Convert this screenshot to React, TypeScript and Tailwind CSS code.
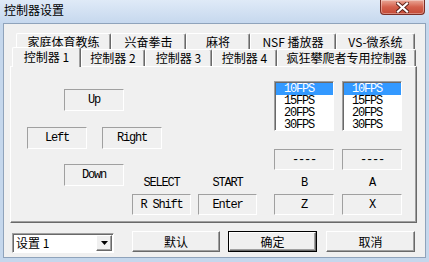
import React from 'react';

const mono = "font-[family-name:'Liberation_Mono',monospace] text-[12px] tracking-[-1.2px] leading-[12px] text-black";
const cjk = "font-[family-name:'Noto_Sans_CJK_SC',sans-serif] text-[12px] text-black";

const edge = 'border border-t-[#a0a0a0] border-l-[#a0a0a0] border-r-white border-b-white flex items-center justify-center';
const raised =
  'border border-t-white border-l-white border-r-[#696969] border-b-[#696969] shadow-[inset_-1px_-1px_0_#a0a0a0] bg-[#f0f0f0] flex items-center justify-center';

const KeyBox: React.FC<{ label: string; className?: string }> = ({ label, className = '' }) => (
  <div className={`${edge} w-[60px] h-[22px] ${className}`}>
    <span className={mono}>{label}</span>
  </div>
);

const KeyColumn: React.FC<{ title: string; value: string; width?: string }> = ({ title, value, width = 'w-[60px]' }) => (
  <div className={`flex flex-col items-center ${width}`}>
    <span className={`${mono} h-[12px]`}>{title}</span>
    <div className={`${edge} ${width} h-[21px] mt-[5px]`}>
      <span className={mono}>{value}</span>
    </div>
  </div>
);

const FpsList: React.FC = () => (
  <div className="w-[60px] h-[50px] bg-white border border-t-[#a0a0a0] border-l-[#a0a0a0] border-r-white border-b-white shadow-[inset_1px_1px_0_#696969]">
    <div className="flex flex-col pt-[1px] pl-[1px]">
      {['10FPS', '15FPS', '20FPS', '30FPS'].map((f, i) => (
        <div
          key={f}
          className={`h-[12px] pl-[8px] flex items-center ${i === 0 ? 'bg-[#3399ff]' : ''}`}
        >
          <span className={`${mono} ${i === 0 ? '!text-white' : ''}`}>{f}</span>
        </div>
      ))}
    </div>
  </div>
);

const backTabs = [
  { label: '家庭体育教练', w: 'w-[95px]' },
  { label: '兴奋拳击', w: 'w-[75px]' },
  { label: '麻将', w: 'w-[64px]' },
  { label: 'NSF 播放器', w: 'w-[86px]' },
  { label: 'VS-微系统', w: 'w-[79px]' },
];

const frontTabs = [
  { label: '控制器 2', w: 'w-[64px]' },
  { label: '控制器 3', w: 'w-[67px]' },
  { label: '控制器 4', w: 'w-[65px]' },
  { label: '疯狂攀爬者专用控制器', w: 'w-[139px]' },
];

const tabCls =
  'h-full border-l border-t border-r border-l-white border-t-white border-r-[#696969] rounded-t-[2px] bg-[#f0f0f0] flex items-center justify-center shadow-[inset_-1px_0_0_#a0a0a0]';

export default function App() {
  return (
    <div className="w-[429px] h-[262px] bg-[#c5d7ec] flex flex-col px-[3px] pb-[4px] overflow-hidden">
      {/* title bar */}
      <div className="h-[23px] -mx-[3px] px-[4px] bg-gradient-to-b from-[#dfeaf7] to-[#c6d8ee] flex items-start justify-between">
        <span className={`${cjk} leading-[20px]`}>控制器设置</span>
        <div className="w-[45px] h-[15px] rounded-b-[4px] border border-t-0 border-[#7b2e25] bg-gradient-to-b from-[#e9a797] via-[#d4604c] to-[#c44a36] flex items-center justify-center shadow-[inset_0_0_0_1px_rgba(255,255,255,0.35)]">
          <svg width="13" height="11" viewBox="0 0 13 11">
            <path d="M2 1.5 L11 9.5 M11 1.5 L2 9.5" stroke="#5a2018" strokeWidth="4" strokeLinecap="square" />
            <path d="M2 1.5 L11 9.5 M11 1.5 L2 9.5" stroke="#ffffff" strokeWidth="2.2" strokeLinecap="square" />
          </svg>
        </div>
      </div>

      {/* client area */}
      <div className="flex-1 bg-[#f0f0f0] border border-[#8fa3bb] flex flex-col">
        {/* back tab row */}
        <div className="flex h-[16px] mt-[9px] ml-[12px]">
          {backTabs.map((t) => (
            <div key={t.label} className={`${tabCls} ${t.w}`}>
              <span className={`${cjk} leading-[14px]`}>{t.label}</span>
            </div>
          ))}
        </div>
        {/* front tab row */}
        <div className="flex items-end h-[17px] ml-[8px]">
          <div className={`${tabCls} relative z-10 !h-[20px] -mb-[1px] w-[69px]`}>
            <span className={`${cjk} leading-[14px] mb-[1px]`}>控制器 1</span>
          </div>
          {frontTabs.map((t) => (
            <div key={t.label} className={`${tabCls} ${t.w}`}>
              <span className={`${cjk} leading-[14px]`}>{t.label}</span>
            </div>
          ))}
        </div>

        {/* tab panel */}
        <div className="ml-[6px] w-[407px] h-[157px] border border-l-white border-t-white border-r-[#696969] border-b-[#696969] shadow-[inset_-1px_-1px_0_#a0a0a0] flex">
          {/* directional pad + select/start */}
          <div className="w-[263px] flex flex-col">
            <KeyBox label="Up" className="mt-[22px] ml-[53px]" />
            <div className="flex mt-[16px] ml-[16px] gap-[15px]">
              <KeyBox label="Left" />
              <KeyBox label="Right" />
            </div>
            <div className="flex items-start mt-[15px] ml-[53px]">
              <KeyBox label="Down" />
              <div className="flex gap-[7px] ml-[8px] mt-[13px]">
                <KeyColumn title="SELECT" value="R Shift" width="w-[59px]" />
                <KeyColumn title="START" value="Enter" width="w-[59px]" />
              </div>
            </div>
          </div>

          {/* B / A column */}
          <div className="flex flex-col mt-[14px]">
            <div className="flex gap-[8px]">
              <FpsList />
              <FpsList />
            </div>
            <div className="flex gap-[8px] mt-[18px]">
              <div className={`${edge} w-[60px] h-[21px]`}>
                <span className={mono}>----</span>
              </div>
              <div className={`${edge} w-[60px] h-[21px]`}>
                <span className={mono}>----</span>
              </div>
            </div>
            <div className="flex gap-[8px] mt-[7px]">
              <KeyColumn title="B" value="Z" />
              <KeyColumn title="A" value="X" />
            </div>
          </div>
        </div>

        {/* bottom row */}
        <div className="flex items-start mt-[8px] ml-[8px]">
          <div className="mt-[2px] w-[102px] h-[20px] bg-white border border-t-[#a0a0a0] border-l-[#a0a0a0] border-r-white border-b-white shadow-[inset_1px_1px_0_#696969] flex items-center justify-between pl-[3px] pr-[1px]">
            <span className={`${cjk} leading-[16px]`}>设置 1</span>
            <div className={`${raised} w-[16px] h-[16px]`}>
              <svg width="7" height="4" viewBox="0 0 7 4">
                <path d="M0 0 H7 L3.5 4 Z" fill="#000" />
              </svg>
            </div>
          </div>
          <div className={`${raised} ml-[18px] w-[88px] h-[21px]`}>
            <span className={`${cjk} leading-[16px]`}>默认</span>
          </div>
          <div className="ml-[8px] w-[89px] h-[21px] border border-black">
            <div className={`${raised} w-full h-full`}>
              <span className={`${cjk} leading-[16px]`}>确定</span>
            </div>
          </div>
          <div className={`${raised} ml-[9px] w-[89px] h-[21px]`}>
            <span className={`${cjk} leading-[16px]`}>取消</span>
          </div>
        </div>
      </div>
    </div>
  );
}
